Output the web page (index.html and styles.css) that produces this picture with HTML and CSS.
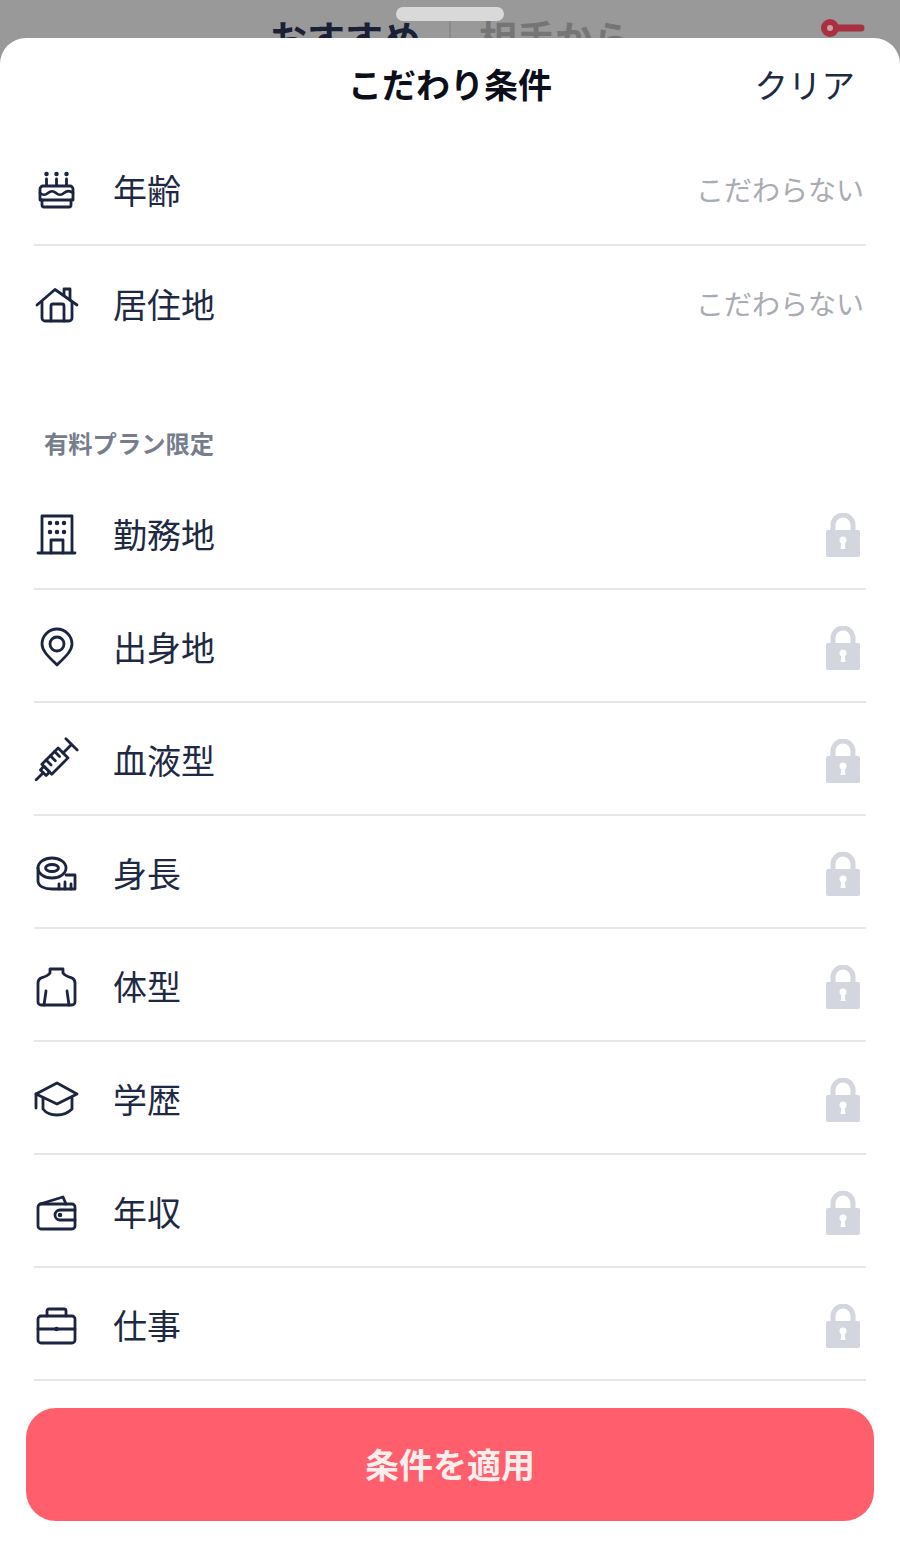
FILE: index.html
```html
<!DOCTYPE html>
<html lang="ja">
<head>
    <meta charset="UTF-8">
    <meta name="viewport" content="width=device-width, initial-scale=1.0">
    <title>こだわり条件</title>
    <link rel="stylesheet" href="styles.css">
</head>
<body>
    <div class="backdrop">
        <div class="handle"></div>
        <div class="tabs">
            <span class="tab tab-active">おすすめ</span>
            <span class="tab-divider"></span>
            <span class="tab">相手から</span>
        </div>
        <svg class="filter-icon" viewBox="0 0 50 30">
            <path d="M20 8H47" />
            <circle class="filter-knob" cx="16" cy="8" r="9" />
            <circle class="filter-hole" cx="16" cy="8" r="3" />
        </svg>
    </div>

    <div class="sheet">
        <div class="header">
            <span></span>
            <h1>こだわり条件</h1>
            <button class="clear">クリア</button>
        </div>

        <div class="list">
            <div class="row">
                <svg class="icon" viewBox="0 0 44 44">
                    <path d="M12.500 11v6M22.500 11v6M32.500 11v6" />
                    <path class="dots" d="M12.500 6h.01M22.500 6h.01M32.500 6h.01" />
                    <path d="M6 32V21a3 3 0 0 1 3-3h27a3 3 0 0 1 3 3v11z" />
                    <path d="M6 25c3 2.500 5 2.500 8 0s5-2.500 8 0 5 2.500 8 0 6-2.500 9 0" />
                    <path d="M8 32v5a2 2 0 0 0 2 2h25a2 2 0 0 0 2-2v-5" />
                </svg>
                <span class="label">年齢</span>
                <span class="value">こだわらない</span>
            </div>
            <div class="row row-last">
                <svg class="icon" viewBox="0 0 44 44">
                    <path d="M3 23 21 7.500 43 23" />
                    <path d="M30 13V7h6v11" />
                    <path d="M8 20v16a3 3 0 0 0 3 3h24a3 3 0 0 0 3-3V20" />
                    <path d="M17 39V24a2 2 0 0 1 2-2h9a2 2 0 0 1 2 2v15" />
                </svg>
                <span class="label">居住地</span>
                <span class="value">こだわらない</span>
            </div>
        </div>

        <div class="section-title">有料プラン限定</div>

        <div class="list">
            <div class="row">
                <svg class="icon" viewBox="0 0 44 44">
                    <path d="M4 41h37M8 41V4h30v37" />
                    <path d="M17 41V28h12v13" />
                    <path class="dots" d="M16 11h.01M23 11h.01M30 11h.01M16 20h.01M23 20h.01M30 20h.01" />
                </svg>
                <span class="label">勤務地</span>
                <svg class="lock" viewBox="0 0 36 44"><use href="#lock-shape" /></svg>
            </div>
            <div class="row">
                <svg class="icon" viewBox="0 0 44 44">
                    <path d="M23 40C15 32 8 26 8 19a15 15 0 0 1 30 0c0 7-7 13-15 21z" />
                    <circle cx="23" cy="19" r="7" />
                </svg>
                <span class="label">出身地</span>
                <svg class="lock" viewBox="0 0 36 44"><use href="#lock-shape" /></svg>
            </div>
            <div class="row">
                <svg class="icon" viewBox="0 0 44 44">
                    <g transform="rotate(-45 22 22)">
                        <path d="M-6 22H4" />
                        <path d="M4 18h5v8H4z" />
                        <path d="M9 15h23v14H9z" />
                        <path d="M15 15v7M21 15v7M27 15v7" />
                        <path d="M32 22h12M44 14v16" />
                    </g>
                </svg>
                <span class="label">血液型</span>
                <svg class="lock" viewBox="0 0 36 44"><use href="#lock-shape" /></svg>
            </div>
            <div class="row">
                <svg class="icon" viewBox="0 0 44 44">
                    <ellipse cx="18" cy="17" rx="14" ry="10" />
                    <ellipse cx="18" cy="17" rx="6.500" ry="3.500" />
                    <path d="M4 17v13c0 5 6 8 14 8h23V24h-9" />
                    <path d="M25 38v-5M31 38v-7M37 38v-5" />
                </svg>
                <span class="label">身長</span>
                <svg class="lock" viewBox="0 0 36 44"><use href="#lock-shape" /></svg>
            </div>
            <div class="row">
                <svg class="icon" viewBox="0 0 44 44">
                    <path d="M16 5h13v4c2 3 6 4 9 5 2 1 3 3 3 5v19a3 3 0 0 1-3 3H7a3 3 0 0 1-3-3V19c0-2 1-4 3-5 3-1 7-2 9-5z" />
                    <path d="M12 27l-2 14M33 27l2 14" />
                </svg>
                <span class="label">体型</span>
                <svg class="lock" viewBox="0 0 36 44"><use href="#lock-shape" /></svg>
            </div>
            <div class="row">
                <svg class="icon" viewBox="0 0 44 44">
                    <path d="M2 17 23 6l20 11-20 10z" />
                    <path d="M9 21v11c3 4 9 6 14 6s11-2 15-6V21" />
                    <path d="M2 17v14" />
                </svg>
                <span class="label">学歴</span>
                <svg class="lock" viewBox="0 0 36 44"><use href="#lock-shape" /></svg>
            </div>
            <div class="row">
                <svg class="icon" viewBox="0 0 44 44">
                    <path d="M41 20v-3a3 3 0 0 0-3-3H7a3 3 0 0 0-3 3v19a3 3 0 0 0 3 3h31a3 3 0 0 0 3-3v-6" />
                    <path d="M6 14 29 7l3 7" />
                    <path d="M41 20H26a5 5 0 0 0 0 10h15z" />
                    <path class="dots" d="M26 25h.01" />
                </svg>
                <span class="label">年収</span>
                <svg class="lock" viewBox="0 0 36 44"><use href="#lock-shape" /></svg>
            </div>
            <div class="row">
                <svg class="icon" viewBox="0 0 44 44">
                    <path d="M7 13h31a3 3 0 0 1 3 3v21a3 3 0 0 1-3 3H7a3 3 0 0 1-3-3V16a3 3 0 0 1 3-3z" />
                    <path d="M13 13V8a2 2 0 0 1 2-2h15a2 2 0 0 1 2 2v5" />
                    <path d="M4 26h37" />
                    <path class="dots" d="M22.500 26h.01" />
                </svg>
                <span class="label">仕事</span>
                <svg class="lock" viewBox="0 0 36 44"><use href="#lock-shape" /></svg>
            </div>
        </div>

        <div class="footer">
            <button class="apply">条件を適用</button>
        </div>
    </div>

    <svg class="defs" width="0" height="0">
        <symbol id="lock-shape" viewBox="0 0 36 44">
            <path d="M8 19V12a10 10 0 0 1 20 0v7" fill="none" stroke="#d3d6de" stroke-width="5" />
            <path d="M3 17h30a2 2 0 0 1 2 2v23a2 2 0 0 1-2 2H3a2 2 0 0 1-2-2V19a2 2 0 0 1 2-2z" fill="#d3d6de" />
            <circle cx="18" cy="27" r="3.500" fill="#fff" />
            <path d="M16.500 28h3l1 8h-5z" fill="#fff" />
        </symbol>
    </svg>
</body>
</html>
```

FILE: styles.css
```css
* {
    box-sizing: border-box;
}
html, body {
    margin: 0;
    padding: 0;
}
body {
    font-family: "Noto Sans CJK JP", "Noto Sans", sans-serif;
    background: #999999;
    height: 1547px;
    overflow: hidden;
}
.backdrop {
    position: relative;
    height: 38px;
    overflow: hidden;
    background: #999999;
}
.handle {
    position: absolute;
    top: 7px;
    left: 396px;
    width: 108px;
    height: 14px;
    border-radius: 7px;
    background: #d9d9d9;
}
.tabs {
    display: flex;
    justify-content: center;
    align-items: center;
    gap: 28px;
    padding-top: 13px;
}
.tab {
    font-size: 38px;
    line-height: 48px;
    font-weight: 700;
    color: #757575;
}
.tab-active {
    color: #1a2036;
}
.tab-divider {
    width: 2px;
    height: 48px;
    background: #8a8a8a;
}
.filter-icon {
    position: absolute;
    top: 20px;
    left: 814px;
    width: 50px;
    height: 30px;
    fill: none;
    stroke: #a83040;
    stroke-width: 7;
    stroke-linecap: round;
    overflow: visible;
}
.filter-knob {
    fill: #a83040;
    stroke: none;
}
.filter-hole {
    fill: #c9a0a6;
    stroke: none;
}
.sheet {
    height: 1509px;
    background: #ffffff;
    border-radius: 26px 26px 0 0;
}
.header {
    display: grid;
    grid-template-columns: 1fr auto 1fr;
    align-items: center;
    height: 95px;
    padding: 0 45px 4px;
}
.header h1 {
    margin: 0;
    font-size: 34px;
    font-weight: 700;
    color: #0c0f1a;
}
.clear {
    justify-self: end;
    border: none;
    background: none;
    padding: 0;
    font-family: inherit;
    font-size: 33.500px;
    color: #1e2a44;
}
.list {
    margin: 0 34px;
}
.row {
    display: flex;
    align-items: center;
    height: 113px;
    padding: 3px 2px 0 0;
    border-bottom: 2px solid #e6e7ea;
}
.row-last {
    border-bottom: none;
}
.icon {
    width: 44px;
    height: 44px;
    margin-right: 35px;
    flex-shrink: 0;
    fill: none;
    stroke: #1b2440;
    stroke-width: 2.800;
    stroke-linecap: round;
    stroke-linejoin: round;
    overflow: visible;
}
.icon .dots {
    stroke-width: 4.500;
}
.label {
    font-size: 34px;
    color: #1e2a44;
    flex: 1;
    padding-bottom: 2px;
}
.value {
    font-size: 28px;
    color: #a9acb3;
    padding-bottom: 3px;
}
.lock {
    width: 36px;
    height: 44px;
    margin: 1px 3px 0 0;
    flex-shrink: 0;
}
.section-title {
    height: 118px;
    padding: 68px 0 0 44px;
    font-size: 24.300px;
    line-height: 32px;
    font-weight: 700;
    color: #767d8c;
}
.footer {
    padding: 27px 26px 0;
}
.apply {
    display: block;
    width: 100%;
    height: 113px;
    border: none;
    border-radius: 30px;
    padding: 0 0 3px;
    background: #ff5f6d;
    font-family: inherit;
    font-size: 34px;
    font-weight: 700;
    color: #fdeeee;
}
.defs {
    position: absolute;
}
```
